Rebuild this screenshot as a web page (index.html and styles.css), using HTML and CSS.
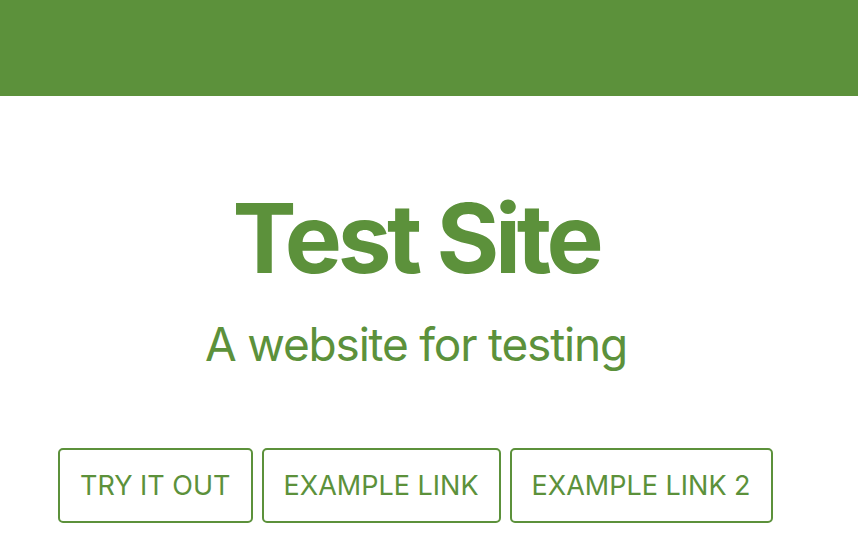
FILE: index.html
```html
<!DOCTYPE html>
<html lang="en">
<head>
<meta charset="utf-8">
<title>Test Site</title>
<link rel="stylesheet" href="styles.css">
</head>
<body>
<header class="topbar"></header>
<main class="hero">
  <h1 class="title">Test Site</h1>
  <p class="subtitle">A website for testing</p>
  <nav class="actions">
    <a class="btn" href="#">TRY IT OUT</a>
    <a class="btn" href="#">EXAMPLE LINK</a>
    <a class="btn" href="#">EXAMPLE LINK 2</a>
  </nav>
</main>
</body>
</html>
```
FILE: styles.css
```css
html, body {
  margin: 0;
  padding: 0;
  background: #ffffff;
}
body {
  font-family: Inter, Roboto, "Liberation Sans", sans-serif;
  color: #5c913b;
}
.topbar {
  height: 96px;
  background: #5c913b;
}
.hero {
  padding-right: 26px;
}
.title {
  margin: 94px 0 0;
  font-size: 96px;
  line-height: 1;
  font-weight: 700;
  letter-spacing: -4.3px;
  text-align: center;
}
.subtitle {
  margin: 35px 0 0;
  font-size: 46px;
  line-height: 1;
  font-weight: 400;
  letter-spacing: -1.2px;
  text-align: center;
}
.actions {
  display: flex;
  gap: 9px;
  margin: 81px 0 0 58px;
}
.btn {
  display: block;
  box-sizing: border-box;
  height: 75px;
  line-height: 71px;
  padding: 0 20px;
  border: 2px solid #5c913b;
  border-radius: 5px;
  color: #5c913b;
  text-decoration: none;
  font-size: 27px;
}
```
